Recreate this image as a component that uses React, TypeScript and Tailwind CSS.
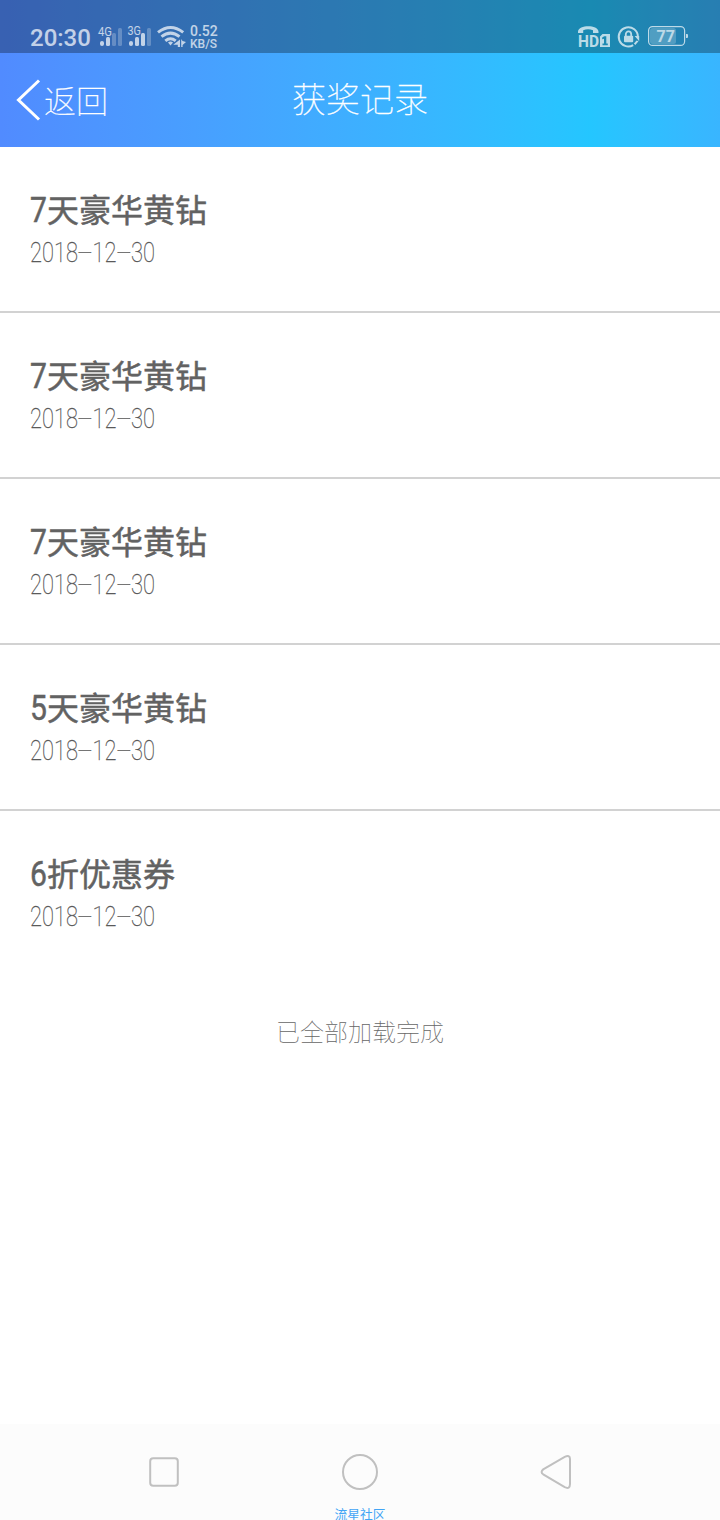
import { Fragment } from "react";

type Reward = {
  id: number;
  count: number;
  title: string;
  date: string;
};

const rewards: Reward[] = [
  { id: 1, count: 7, title: "天豪华黄钻", date: "2018-12-30" },
  { id: 2, count: 7, title: "天豪华黄钻", date: "2018-12-30" },
  { id: 3, count: 7, title: "天豪华黄钻", date: "2018-12-30" },
  { id: 4, count: 5, title: "天豪华黄钻", date: "2018-12-30" },
  { id: 5, count: 6, title: "折优惠券", date: "2018-12-30" },
];

function SignalIcons() {
  return (
    <svg className="ml-[5px] h-7 w-[92px] shrink-0" viewBox="96 24 92 28" fill="white">
      <g fontFamily="Roboto, sans-serif" fontSize="12">
        <text x="98" y="35.5" textLength="14" lengthAdjust="spacingAndGlyphs">
          4G
        </text>
        <text x="127.5" y="34.5" textLength="13.5" lengthAdjust="spacingAndGlyphs">
          3G
        </text>
      </g>
      <rect x="100" y="41" width="4" height="5" rx="2" />
      <rect x="106" y="37" width="4" height="9" rx="1.5" />
      <rect x="112" y="33" width="4" height="13" rx="1.5" opacity="0.35" />
      <rect x="118" y="28" width="4" height="18" rx="1.5" opacity="0.35" />
      <rect x="129" y="41" width="4" height="5" rx="2" />
      <rect x="135" y="37" width="4" height="9" rx="1.5" />
      <rect x="141" y="33" width="4" height="13" rx="1.5" />
      <rect x="147" y="28" width="4" height="18" rx="1.5" opacity="0.35" />
      <g fill="none" stroke="white" strokeWidth="3">
        <path d="M158 32.4Q170.5 22.6 183.2 32.4" />
        <path d="M161.5 36.7Q170.5 29.5 179.5 36.7" />
        <path d="M165.3 40.8Q170.5 36.6 175.7 40.8" />
      </g>
      <path d="M168 42.4Q170.5 40.6 173 42.4L170.5 45.5Z" />
      <path d="M180 39.5V47H177.8V44.8H173.2ZM181.2 39V47H182.6V45L186 42L182.6 41Z" />
    </svg>
  );
}

function SystemIcons() {
  return (
    <svg className="h-7 w-28 shrink-0" viewBox="577 24 112 28" fill="white">
      {/* volte */}
      <path d="M578 33V31.5C578.5 24.5 598 24.5 598.5 31.5V33H593V30.3Q588 28.3 583.2 30.3V33Z" />
      <text
        x="578"
        y="47"
        fontFamily="Roboto, sans-serif"
        fontSize="17"
        fontWeight="700"
        textLength="21"
        lengthAdjust="spacingAndGlyphs"
      >
        HD
      </text>
      <path
        fillRule="evenodd"
        d="M602.5 34H610V47H600V36.5ZM604.2 36.3L602.2 37.4V39.2L604 38.7V43.6H602.5V45.2H607.8V43.6H606.3V36.3Z"
      />
      {/* rotation lock */}
      <path
        d="M633.2 45.1A9.6 9.6 0 1 1 637.9 36.5"
        fill="none"
        stroke="white"
        strokeWidth="2"
      />
      <path d="M634.6 36H639.2V41.2ZM636.6 40.6L638.5 41.2L635.3 45L633.9 43.6Z" />
      <path d="M625.8 37V34.3a2.7 2.9 0 0 1 5.4 0V37" fill="none" stroke="white" strokeWidth="1.8" />
      <rect x="624" y="35.8" width="9.2" height="6.4" rx="1" />
      {/* battery */}
      <rect x="648.6" y="26.6" width="36" height="18.8" rx="4" fill="none" stroke="white" strokeWidth="1.2" />
      <rect x="650" y="28" width="26" height="16" rx="2.5" opacity="0.3" />
      <path d="M686 34H687Q688 34 688 35V37Q688 38 687 38H686Z" />
      <text x="656.5" y="42" fontFamily="Roboto, sans-serif" fontSize="16" fontWeight="700" textLength="18.5">
        77
      </text>
    </svg>
  );
}

function StatusBar() {
  return (
    <div className="flex h-[53px] items-start justify-between bg-black/30 pr-[31px] pl-[30px] pt-6">
      <div className="flex items-start text-white opacity-70">
        <span className="w-[61px] font-[Roboto] text-2xl leading-7 font-medium">20:30</span>
        <SignalIcons />
        <div className="ml-[2px] flex flex-col pt-px font-[Roboto] font-medium">
          <span className="text-[14px] leading-[13px]">0.52</span>
          <span className="text-[12px] leading-[13px]">KB/S</span>
        </div>
      </div>
      <div className="opacity-70">
        <SystemIcons />
      </div>
    </div>
  );
}

function TitleBar() {
  return (
    <header className="grid h-[94px] grid-cols-3 items-center text-white">
      <button className="flex items-center pl-4 text-left">
        <svg className="h-[42px] w-7" viewBox="0 0 28 42" fill="none" stroke="white" strokeWidth="3">
          <path d="M23 1.5L2.5 21L23 40.5" />
        </svg>
        <span className="pb-0.5 text-[32px] leading-10 font-thin [-webkit-text-stroke:0.3px_white]">返回</span>
      </button>
      <h1 className="pb-1 text-center text-[34px] leading-10 font-thin [-webkit-text-stroke:0.3px_white]">获奖记录</h1>
    </header>
  );
}

function RewardDate({ value }: { value: string }) {
  return (
    <p className="flex h-9 origin-left scale-x-[0.81] items-center font-[Roboto] text-[27px] leading-9 font-thin text-[#555] [-webkit-text-stroke:0.3px_#555]">
      {value.split("-").map((part, i) => (
        <Fragment key={i}>
          {i > 0 && <span className="inline-block w-[18px] origin-center scale-x-[2.4] text-center">-</span>}
          <span>{part}</span>
        </Fragment>
      ))}
    </p>
  );
}

function RewardRow({ reward }: { reward: Reward }) {
  return (
    <li className="h-[166px] border-b-2 border-[#d2d2d2] px-[30px] pt-[38px] last:border-b-0">
      <h2 className="flex h-[50px] items-start text-[32px] leading-[46px] text-[#626262] [-webkit-text-stroke:0.5px_#626262]">
        <span className="w-[17px] origin-left scale-x-[0.86] pt-[3px] font-[Roboto] text-[35px]">{reward.count}</span>
        <span>{reward.title}</span>
      </h2>
      <RewardDate value={reward.date} />
    </li>
  );
}

function NavBar() {
  return (
    <nav className="relative flex h-24 justify-between bg-[#fcfcfc] px-[144px] pt-7">
      <svg className="h-10 w-10" viewBox="0 0 40 40" fill="none" stroke="#c0c0c0" strokeWidth="2">
        <rect x="6.2" y="6.2" width="27.6" height="27.6" rx="3" />
      </svg>
      <svg className="h-10 w-10" viewBox="0 0 40 40" fill="none" stroke="#c0c0c0" strokeWidth="2">
        <circle cx="20" cy="20" r="17" />
      </svg>
      <svg className="h-10 w-10" viewBox="0 0 40 40" fill="none" stroke="#c0c0c0" strokeWidth="2">
        <path d="M7.2 17.4L28.7 4.9Q34 2.6 34 7V32Q34 37.5 28.7 35.2L7.2 22.3Q4 20 7.2 17.4Z" />
      </svg>
      <span className="absolute bottom-0 left-1/2 -translate-x-1/2 text-[12.8px] leading-[13px] whitespace-nowrap text-[#42a5f5]">
        流星社区
      </span>
    </nav>
  );
}

export default function App() {
  return (
    <main className="flex h-[1520px] w-[720px] flex-col overflow-hidden bg-white font-['Noto_Sans_CJK_SC',sans-serif]">
      <div className="bg-linear-to-r from-[#518bff] via-[#24c6ff] via-82% to-[#39b5ff]">
        <StatusBar />
        <TitleBar />
      </div>
      <ul>
        {rewards.map((reward) => (
          <RewardRow key={reward.id} reward={reward} />
        ))}
      </ul>
      <p className="pt-9 text-center text-2xl leading-9 font-thin text-[#666]">已全部加载完成</p>
      <div className="flex-1" />
      <NavBar />
    </main>
  );
}
